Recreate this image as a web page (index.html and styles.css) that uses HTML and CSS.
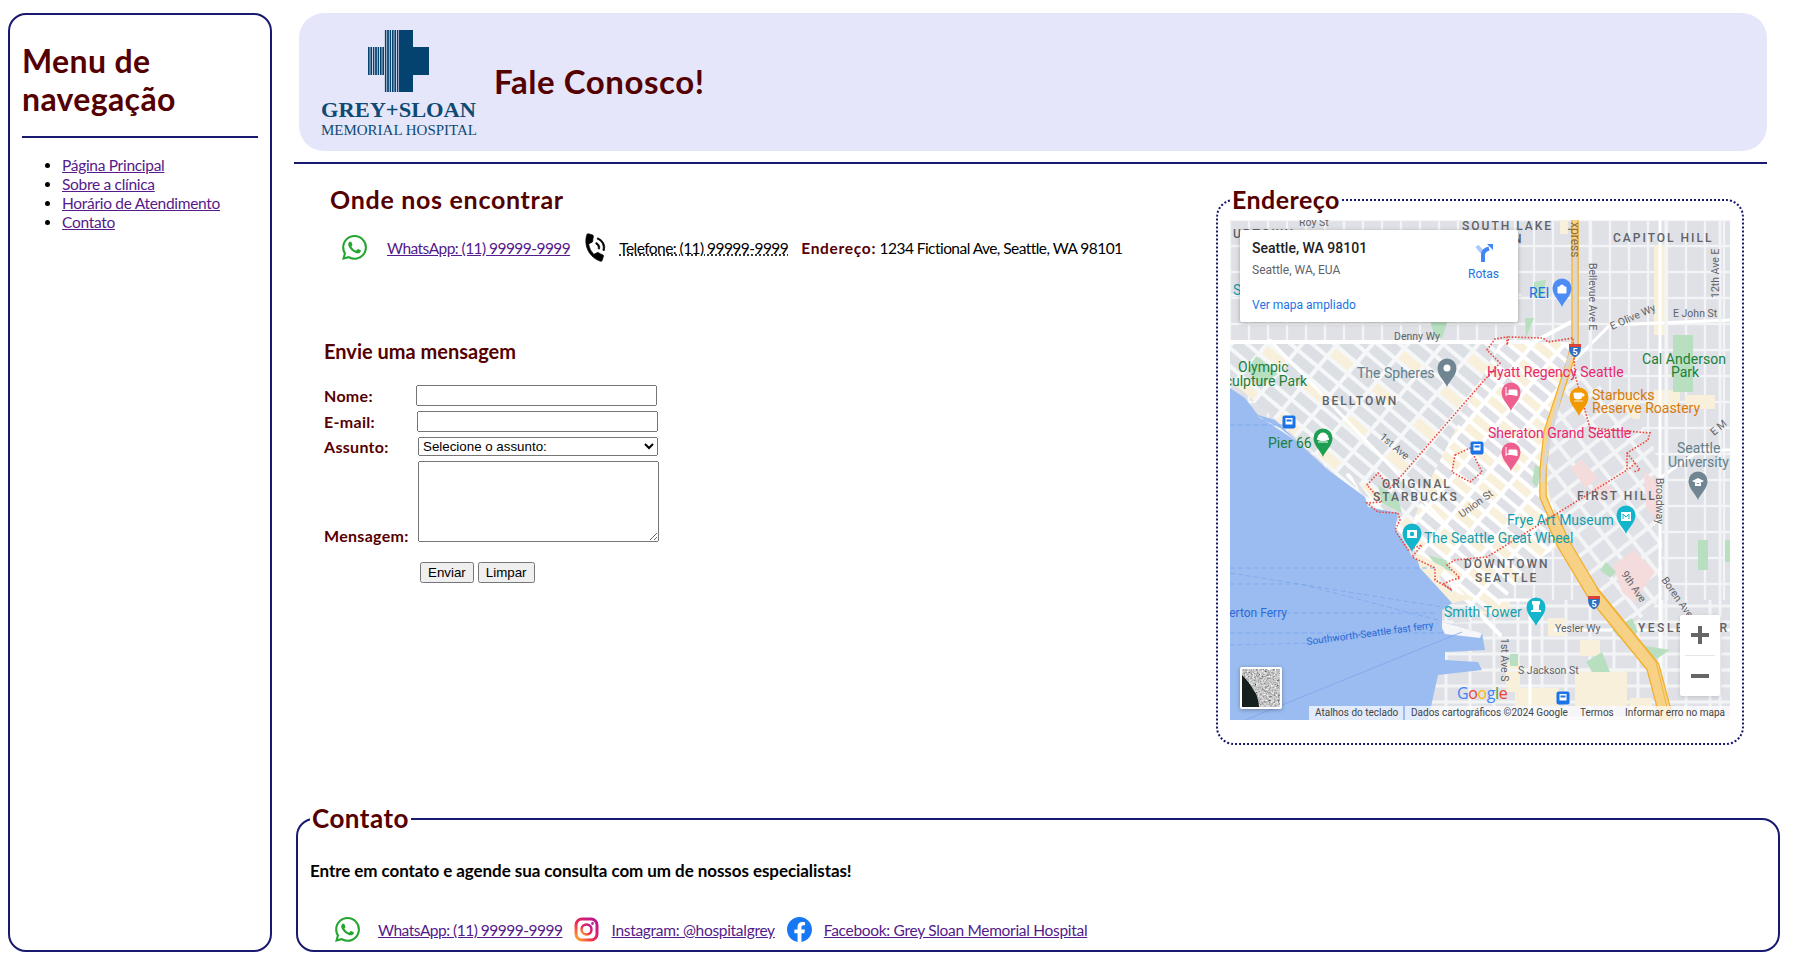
FILE: index.html
```html
<!DOCTYPE html>
<html lang="pt-BR">
<head>
<meta charset="utf-8">
<title>Fale Conosco</title>
<link rel="stylesheet" href="styles.css">
</head>
<body>
<svg class="defs" width="0" height="0" aria-hidden="true">
  <defs>
    <symbol id="i-wa" viewBox="0 0 24 24"><path fill="#25a52f" d="M17.472 14.382c-.297-.149-1.758-.867-2.03-.967-.273-.099-.471-.148-.67.15-.197.297-.767.966-.94 1.164-.173.199-.347.223-.644.075-.297-.15-1.255-.463-2.39-1.475-.883-.788-1.48-1.761-1.653-2.059-.173-.297-.018-.458.13-.606.134-.133.298-.347.446-.52.149-.174.198-.298.298-.497.099-.198.05-.371-.025-.52-.075-.149-.669-1.612-.916-2.207-.242-.579-.487-.5-.669-.51-.173-.008-.371-.01-.57-.01-.198 0-.52.074-.792.372-.272.297-1.04 1.016-1.04 2.479 0 1.462 1.065 2.875 1.213 3.074.149.198 2.096 3.2 5.077 4.487.709.306 1.262.489 1.694.625.712.227 1.36.195 1.871.118.571-.085 1.758-.719 2.006-1.413.248-.694.248-1.289.173-1.413-.074-.124-.272-.198-.57-.347m-5.421 7.403h-.004a9.87 9.87 0 01-5.031-1.378l-.361-.214-3.741.982.998-3.648-.235-.374a9.86 9.86 0 01-1.51-5.26c.001-5.45 4.436-9.884 9.888-9.884 2.64 0 5.122 1.03 6.988 2.898a9.825 9.825 0 012.893 6.994c-.003 5.45-4.437 9.884-9.885 9.884m8.413-18.297A11.815 11.815 0 0012.05 0C5.495 0 .16 5.335.157 11.892c0 2.096.547 4.142 1.588 5.945L.057 24l6.305-1.654a11.882 11.882 0 005.683 1.448h.005c6.554 0 11.89-5.335 11.893-11.893a11.821 11.821 0 00-3.48-8.413z"/></symbol>
    <symbol id="pin" viewBox="-10 -10 20 30" overflow="visible"><path d="M0 19C-2 13-9.5 8-9.5 0a9.5 9.5 0 0 1 19 0C9.5 8 2 13 0 19z"/></symbol>
    <linearGradient id="ig" x1="0" y1="1" x2="1" y2="0"><stop offset="0" stop-color="#fdb52a"/><stop offset=".4" stop-color="#ee2a4c"/><stop offset="1" stop-color="#b3139c"/></linearGradient>
    <filter id="noise" x="0" y="0" width="100%" height="100%"><feTurbulence type="fractalNoise" baseFrequency="0.55" numOctaves="3" seed="4"/><feColorMatrix values="0.9 0.9 0 0 -0.35  0.9 0.9 0 0 -0.35  0.9 0.9 0 0 -0.35  0 0 0 0 1"/></filter>
  </defs>
</svg>
<div class="page">
  <aside class="side">
    <h2 class="side-title">Menu de navegação</h2>
    <hr class="rule side-rule">
    <ul class="side-list">
      <li><a href="#">Página Principal</a></li>
      <li><a href="#">Sobre a clínica</a></li>
      <li><a href="#">Horário de Atendimento</a></li>
      <li><a href="#">Contato</a></li>
    </ul>
  </aside>
  <main class="main">
    <header class="top">
      <svg class="logo" viewBox="0 0 160 115" width="160" height="115">
        <defs><pattern id="stripes" width="2.4" height="10" patternUnits="userSpaceOnUse" x="48"><rect width="1.6" height="10" fill="#04426f"/></pattern></defs>
        <rect x="48" y="21" width="16" height="28" fill="url(#stripes)"/>
        <rect x="64" y="4" width="16" height="62" fill="url(#stripes)"/>
        <rect x="79" y="4" width="14" height="62" fill="#04426f"/>
        <rect x="79" y="21" width="30" height="28" fill="#04426f"/>
        <text class="logo-a" x="1" y="91" textLength="155" lengthAdjust="spacingAndGlyphs">GREY+SLOAN</text>
        <text class="logo-b" x="1" y="108.500" textLength="156" lengthAdjust="spacingAndGlyphs">MEMORIAL HOSPITAL</text>
      </svg>
      <h1 class="top-title">Fale Conosco!</h1>
    </header>
    <hr class="rule main-rule">
    <div class="mid">
      <section class="left">
        <h2 class="where">Onde nos encontrar</h2>
        <div class="reach">
          <svg class="ico"><use href="#i-wa"/></svg>
          <a class="lnk lnk-wa" href="#">WhatsApp: (11) 99999-9999</a>
          <svg class="ico ico-ph" viewBox="2 2 20 20"><path transform="rotate(18 12 12)" stroke="#000" stroke-width=".5" d="M20 15.500c-1.250 0-2.450-.2-3.570-.57a1.020 1.020 0 0 0-1.020.24l-2.200 2.200a15.045 15.045 0 0 1-6.590-6.580l2.200-2.210a.96.96 0 0 0 .25-1A11.360 11.360 0 0 1 8.500 4c0-.55-.45-1-1-1H4c-.55 0-1 .45-1 1 0 9.390 7.610 17 17 17 .55 0 1-.45 1-1v-3.500c0-.55-.45-1-1-1zM19 12h1.200a8.200 8.200 0 0 0-8.200-8.200v1.200c3.870 0 7 3.130 7 7zm-4 0h1.200c0-2.300-1.900-4.200-4.200-4.200v1.200c1.660 0 3 1.340 3 3z"/></svg>
          <span class="tel">Telefone: (11) 99999-9999</span>
          <span class="addr"><b>Endereço:</b> 1234 Fictional Ave, Seattle, WA 98101</span>
        </div>
        <h3 class="send">Envie uma mensagem</h3>
        <form class="form">
          <div class="row"><label class="lab lab-n" for="f1">Nome:</label><input id="f1" class="ctl ctl-text" type="text"></div>
          <div class="row"><label class="lab lab-e" for="f2">E-mail:</label><input id="f2" class="ctl ctl-text" type="text"></div>
          <div class="row"><label class="lab lab-a" for="f3">Assunto:</label><select id="f3" class="ctl ctl-sel"><option>Selecione o assunto:</option></select></div>
          <div class="row row-end"><label class="lab lab-a lab-m" for="f4">Mensagem:</label><textarea id="f4" class="ctl ctl-area"></textarea></div>
          <div class="btns"><button class="btn" type="button">Enviar</button><button class="btn" type="reset">Limpar</button></div>
        </form>
      </section>
      <fieldset class="box box-map">
        <legend class="leg leg-e">Endereço</legend>
        <div class="map">
          <svg class="map-svg" viewBox="0 0 500 500" width="500" height="500">
            <defs>
              <pattern id="gE" width="19" height="26" patternUnits="userSpaceOnUse"><rect width="19" height="26" fill="#f3f4f5"/><rect x="1.200" y="1.200" width="16.600" height="23.600" fill="#dfe1e6"/></pattern>
              <pattern id="gS" width="24" height="16" patternUnits="userSpaceOnUse" y="2"><rect width="24" height="16" fill="#f3f4f5"/><rect x="1.500" y="1.500" width="21" height="13" fill="#dfe1e6"/></pattern>
              <pattern id="gD" width="54" height="42" patternUnits="userSpaceOnUse" patternTransform="rotate(40)"><rect width="54" height="42" fill="#f6f7f8"/><g fill="#dcdfe4"><rect x="2" y="2" width="23" height="10"/><rect x="29" y="2" width="23" height="10"/><rect x="2" y="16" width="23" height="10"/><rect x="29" y="30" width="23" height="10"/><rect x="29" y="16" width="23" height="10"/></g><rect x="2" y="30" width="23" height="10" fill="#f8f0da"/></pattern>
              <pattern id="gY" width="48" height="36" patternUnits="userSpaceOnUse" patternTransform="rotate(40)"><rect width="48" height="36" fill="#fff"/><g fill="#dfe1e6"><rect x="2" y="2" width="20" height="8"/><rect x="26" y="14" width="20" height="8"/><rect x="2" y="26" width="20" height="8"/></g><g fill="#f8f0da"><rect x="26" y="2" width="20" height="8"/><rect x="2" y="14" width="20" height="8"/><rect x="26" y="26" width="20" height="8"/></g></pattern>
              <pattern id="gH" width="40" height="40" patternUnits="userSpaceOnUse" patternTransform="rotate(-38)"><rect width="40" height="40" fill="#f3f4f5"/><g fill="#dfe1e6"><rect x="2" y="2" width="16" height="16"/><rect x="22" y="2" width="16" height="16"/><rect x="2" y="22" width="16" height="16"/><rect x="22" y="22" width="16" height="16"/></g></pattern>
            </defs>
            <rect width="500" height="500" fill="url(#gE)"/>
            <rect y="380" width="500" height="120" fill="url(#gS)"/>
            <g fill="#f8f0da">
              <rect x="424" y="25" width="11" height="90"/><rect x="424" y="170" width="26" height="20"/><rect x="330" y="0" width="8" height="14"/>
              <rect x="455" y="175" width="30" height="14"/><rect x="370" y="175" width="40" height="24"/><rect x="60" y="62" width="40" height="28"/>
              <rect x="276" y="442" width="14" height="30"/><rect x="318" y="398" width="18" height="18"/><rect x="350" y="420" width="20" height="16"/>
              <rect x="285" y="468" width="44" height="18"/><rect x="345" y="450" width="52" height="36"/><rect x="400" y="478" width="22" height="20"/>
              <rect x="250" y="380" width="30" height="14"/>
            </g>
            <polygon points="0,122 110,122 300,124 343,122 326,190 313,250 333,323 300,345 262,395 222,372 138,285 60,212 0,160" fill="url(#gD)"/>
            <polygon points="270,122 343,122 326,190 313,250 333,323 300,345 262,395 222,372 175,320 200,260" fill="url(#gY)"/>
            <polygon points="343,140 420,215 432,258 432,375 420,392 392,410 363,373 333,323 315,255 325,190" fill="url(#gH)"/>
            <g fill="#f5dcdc">
              <polygon points="340,248 352,240 368,258 356,268"/><polygon points="383,345 404,330 425,352 404,382 392,372"/><polygon points="414,252 428,262 428,300 416,288"/><polygon points="362,268 374,260 384,270 372,282"/>
            </g>
            <g fill="none" stroke="#fff" stroke-linecap="round">
              <path stroke-width="4" d="M0 122H300M300 124L345 100M118 255L270 415"/>
              <path stroke-width="3" d="M430 258L470 230H500M325 410H500M430 0V500M270 380H300V500M345 140L380 105 500 100M40 120L250 340"/>
              <path stroke-width="3" stroke="#f3f4f5" d="M360 0V130M436 0V500M0 75H290M490 0V500M270 450H500"/>
            </g>
            <g fill="#b8e0c0">
              <rect x="443" y="115" width="20" height="57"/><rect x="468" y="320" width="10" height="30"/><rect x="280" y="434" width="8" height="12"/><rect x="495" y="320" width="5" height="22"/>
              <polygon points="200,100 218,100 212,118 205,118"/><polygon points="304,62 316,60 312,78 304,78"/><polygon points="296,118 304,98 295,98"/><polygon points="26,136 48,154 30,165 18,150"/>
              <polygon points="382,410 402,398 408,412 392,420"/><polygon points="410,425 440,430 425,440"/><polygon points="356,442 372,432 380,452 362,452"/><polygon points="148,265 168,278 172,293 152,283"/><polygon points="198,335 216,340 222,352 206,345"/>
              <polygon points="376,342 386,352 380,358 370,350"/><polygon points="305,245 312,248 307,268 302,262"/>
            </g>
            <path d="M0 500V168L15 178 28 195 45 200 68 222 98 250 135 277 138 287 168 293 165 310 175 323 182 337 205 348 205 360 222 370 222 383 212 390 212 402 252 413 255 430 215 432 215 440 248 442 252 450 208 455 198 500Z" fill="#9bbcf0"/>
            <path d="M212 402L252 413 250 418 215 414 212 408Z" fill="#f5f6f7"/>
            <path d="M222 395H238L240 402 224 403Z" fill="#dfe1e6"/>
            <path d="M120 253L128 262 140 278 132 275Z" fill="#dfe1e6"/>
            <path d="M185 332L215 348 208 360 222 372 245 378 222 383 190 348Z" fill="#f8f0da"/>
            <polygon points="28,196 68,222 50,208 30,198" fill="#f3f4f5"/>
            <g fill="none" stroke="#7aa6ee" stroke-width=".8" stroke-dasharray="5 3">
              <path d="M0 348H205"/><path d="M0 353L212 387"/><path d="M0 364L70 364 208 400"/><path d="M0 393H208"/><path d="M0 413H215"/><path d="M0 425L80 423 208 403"/><path d="M0 205H55"/>
            </g>
            <path d="M15 500L232 412" fill="none" stroke="#7aa6ee" stroke-width=".8"/>
            <path fill="none" stroke="#f3ae2a" stroke-width="7.500" d="M345 0V122L340 142 317 212 313 250 313 277 333 323"/>
            <path fill="none" stroke="#f8d48d" stroke-width="5" d="M345 0V122L340 142 317 212 313 250 313 277 333 323"/>
            <path fill="none" stroke="#d5d7db" stroke-width="3.500" d="M345 20V122L338 142 318 225 312 262"/>
            <path fill="none" stroke="#f3ae2a" stroke-width="14" d="M321 296L333 323 363 373 393 410 423 447 437 500"/>
            <path fill="none" stroke="#f6d186" stroke-width="11.500" d="M321 296L333 323 363 373 393 410 423 447 437 500"/>
            <path fill="none" stroke="#f3ae2a" stroke-width=".8" d="M366 368L396 405 426 442 440 500"/>
            <g fill="none" stroke="#ee4a3f" stroke-width="1.600" stroke-dasharray="1.600 1.600">
              <path d="M250 165L270 143 257 130 265 119 277 117 277 125 279 117 313 118 318 122 343 118 345 155 360 208 420 213 418 220 397 233 397 250 257 337 225 340 217 345 230 358 222 360 213 364 222 370 205 360 205 348 182 337 192 325 178 330 165 310 170 300 168 293 148 292 137 283 152 282 137 265 148 253 160 268 172 255Z"/>
              <path d="M225 235L240 228 252 252 240 262 222 252Z"/>
              <path d="M397 233L405 243 398 250M405 243L410 250 403 252"/>
            </g>
            <g class="m-road">
              <text x="69" y="6">Roy St</text>
              <text x="164" y="120">Denny Wy</text>
              <text x="443" y="97">E John St</text>
              <text x="325" y="412">Yesler Wy</text>
              <text x="288" y="454">S Jackson St</text>
              <text transform="translate(149 218) rotate(40)">1st Ave</text>
              <text transform="translate(232 298) rotate(-36)">Union St</text>
              <text transform="translate(382 110) rotate(-24)">E Olive Wy</text>
              <text transform="translate(359 43) rotate(90)">Bellevue Ave E</text>
              <text transform="translate(489 78) rotate(-90)">12th Ave E</text>
              <text transform="translate(426 258) rotate(90)">Broadway</text>
              <text transform="translate(391 354) rotate(56)">9th Ave</text>
              <text transform="translate(431 360) rotate(55)">Boren Ave</text>
              <text transform="translate(271 418) rotate(90)">1st Ave S</text>
              <text transform="translate(484 216) rotate(-40)">E M</text>
              <text transform="translate(341 0) rotate(90)" class="m-exp" x="2">xpress</text>
            </g>
            <g class="m-area">
              <text x="3" y="18">UPTOWN</text>
              <text x="232" y="10">SOUTH LAKE</text>
              <text x="247" y="23">UNION</text>
              <text x="383" y="22">CAPITOL HILL</text>
              <text x="92" y="185">BELLTOWN</text>
              <text x="152" y="268">ORIGINAL</text>
              <text x="143" y="281">STARBUCKS</text>
              <text x="234" y="348">DOWNTOWN</text>
              <text x="245" y="362">SEATTLE</text>
              <text x="347" y="280">FIRST HILL</text>
              <text class="m-yes" x="408" y="412">YESLER TERRACE</text>
            </g>
            <g class="m-poi">
              <text class="c-green" x="8" y="152">Olympic</text>
              <text class="c-green" x="77" y="166" text-anchor="end">Sculpture Park</text>
              <text class="c-slate" x="127" y="158">The Spheres</text>
              <text class="c-green" x="38" y="228">Pier 66</text>
              <text class="c-blue" x="299" y="78">REI</text>
              <text class="c-green" x="412" y="144" textLength="84">Cal Anderson</text>
              <text class="c-green" x="441" y="157">Park</text>
              <text class="c-pink" x="257" y="157">Hyatt Regency Seattle</text>
              <text class="c-orange" x="362" y="180">Starbucks</text>
              <text class="c-orange" x="362" y="193">Reserve Roastery</text>
              <text class="c-pink" x="258" y="218">Sheraton Grand Seattle</text>
              <text class="c-slate" x="447" y="233">Seattle</text>
              <text class="c-slate" x="438" y="247">University</text>
              <text class="c-teal" x="194" y="323">The Seattle Great Wheel</text>
              <text class="c-teal" x="277" y="305">Frye Art Museum</text>
              <text class="c-teal" x="214" y="397">Smith Tower</text>
              <text class="c-teal" x="3" y="75">S</text>
              <text class="c-ferry" x="57" y="397" text-anchor="end">Bremerton Ferry</text>
              <text class="c-ferry c-small" transform="translate(77 425) rotate(-7.500)">Southworth-Seattle fast ferry</text>
            </g>
            <use href="#pin" x="207" y="138" width="20" height="30" fill="#6f8692"/><circle cx="217" cy="148" r="3.500" fill="#fff"/>
            <use href="#pin" x="83" y="208" width="20" height="30" fill="#1e9e52"/><path d="M88 218a5 5 0 0 1 10 0l1 1c-3 2-9 2-12 0zM88 222h10" fill="#fff" stroke="#fff" stroke-width="1"/>
            <use href="#pin" x="322" y="58" width="20" height="30" fill="#4c8df5"/><path d="M328 67h8v6h-8zM330 67a2 2 0 0 1 4 0" fill="#fff" stroke="#fff" stroke-width="1"/>
            <use href="#pin" x="271" y="162" width="20" height="30" fill="#ee5f8f"/><path d="M276 167v9M276 174h11v2M279 170h7a1 1 0 0 1 1 1v3h-8z" fill="#fff" stroke="#fff" stroke-width="1"/>
            <use href="#pin" x="271" y="222" width="20" height="30" fill="#ee5f8f"/><path d="M276 227v9M276 234h11v2M279 230h7a1 1 0 0 1 1 1v3h-8z" fill="#fff" stroke="#fff" stroke-width="1"/>
            <use href="#pin" x="339" y="167" width="20" height="30" fill="#f29900"/><path d="M344 173h8v3a3 3 0 0 1-3 3h-2a3 3 0 0 1-3-3zM352 174h2v2h-2zM344 181h9" fill="#fff" stroke="#fff" stroke-width=".8"/>
            <use href="#pin" x="172" y="303" width="20" height="30" fill="#12b5cb"/><path d="M177 310h10v8h-10z" fill="#fff"/><circle cx="182" cy="314" r="2.200" fill="#12b5cb"/>
            <use href="#pin" x="386" y="285" width="20" height="30" fill="#12b5cb"/><path d="M391 292h10v9h-10z" fill="#fff"/><path d="M393 299v-5l3 3 3-3v5" fill="none" stroke="#12b5cb" stroke-width="1"/>
            <use href="#pin" x="296" y="377" width="20" height="30" fill="#12b5cb"/><path d="M302 381h8v3l-1 1v5h2v2h-10v-2h2v-5l-1-1z" fill="#fff"/>
            <use href="#pin" x="458" y="251" width="20" height="30" fill="#6f8692"/><path d="M462 261l6-3 6 3-6 3zM465 263v3h6v-3" fill="#fff"/>
            <g fill="#1a73e8"><rect x="52.500" y="195.500" width="13" height="13" rx="2"/><rect x="240.500" y="221.500" width="13" height="13" rx="2"/><rect x="326.500" y="471.500" width="13" height="13" rx="2"/></g>
            <g fill="#fff"><path d="M55.500 198h7v6.500h-7zM243.500 224h7v6.500h-7zM329.500 474h7v6.500h-7z"/></g>
            <g fill="#1a73e8"><rect x="56.500" y="199.500" width="5" height="2"/><rect x="244.500" y="225.500" width="5" height="2"/><rect x="330.500" y="475.500" width="5" height="2"/></g>
            <path d="M339 124h12v3.500q0 7-6 10-6-3-6-10z" fill="#2f6fc0"/><path d="M339 124h12v3h-12z" fill="#d8433a"/><text class="m-shield" x="345" y="134.500">5</text>
            <path d="M358 376h12v3.500q0 7-6 10-6-3-6-10z" fill="#2f6fc0"/><path d="M358 376h12v3h-12z" fill="#d8433a"/><text class="m-shield" x="364" y="386.500">5</text>
            <text class="m-google" x="227" y="479"><tspan fill="#4285f4">G</tspan><tspan fill="#ea4335">o</tspan><tspan fill="#fbbc05">o</tspan><tspan fill="#4285f4">g</tspan><tspan fill="#34a853">l</tspan><tspan fill="#ea4335">e</tspan></text>
          </svg>
          <div class="card">
            <div class="card-info">
              <div class="card-title">Seattle, WA 98101</div>
              <div class="card-sub">Seattle, WA, EUA</div>
              <a class="card-link" href="#">Ver mapa ampliado</a>
            </div>
            <div class="card-dir">
              <svg viewBox="0 0 18 18" width="18" height="18"><path d="M2 2L8 9" fill="none" stroke="#a9c9f7" stroke-width="4"/><path d="M8 18V11Q8 6 14 4.500" fill="none" stroke="#4285f4" stroke-width="4"/><path d="M12 0H18V6Z" fill="#4285f4"/></svg>
              <span>Rotas</span>
            </div>
          </div>
          <div class="sat">
            <svg viewBox="0 0 38 38" width="38" height="38"><rect width="38" height="38" filter="url(#noise)"/><path d="M0 6Q8 14 12 22 16 26 17 38H0Z" fill="#15201f"/></svg>
          </div>
          <div class="zoom">
            <div class="zoom-btn"><svg viewBox="0 0 18 18" width="18" height="18"><path d="M7 0h4v7h7v4h-7v7H7v-7H0V7h7z" fill="#666"/></svg></div>
            <div class="zoom-sep"></div>
            <div class="zoom-btn"><svg viewBox="0 0 18 18" width="18" height="18"><path d="M0 7h18v4H0z" fill="#666"/></svg></div>
          </div>
          <div class="attr">
            <span class="attr-a">Atalhos do teclado</span>
            <span class="attr-b">Dados cartográficos ©2024 Google</span>
            <span class="attr-c">Termos</span>
            <span class="attr-d">Informar erro no mapa</span>
          </div>
        </div>
      </fieldset>
    </div>
    <fieldset class="box box-contact">
      <legend class="leg leg-c">Contato</legend>
      <p class="lead">Entre em contato e agende sua consulta com um de nossos especialistas!</p>
      <div class="social">
        <svg class="ico"><use href="#i-wa"/></svg>
        <a class="lnk lnk-wa" href="#">WhatsApp: (11) 99999-9999</a>
        <svg class="ico ico-ig" viewBox="0 0 25 25"><rect x="2" y="2" width="21" height="21" rx="6" fill="none" stroke="url(#ig)" stroke-width="3"/><circle cx="12.500" cy="12.500" r="5" fill="none" stroke="url(#ig)" stroke-width="2.500"/><circle cx="18.500" cy="6.500" r="1.400" fill="#c1258a"/></svg>
        <a class="lnk lnk-ig" href="#">Instagram: @hospitalgrey</a>
        <svg class="ico ico-fb" viewBox="0 0 24 24"><path fill="#1877f2" d="M24 12.073c0-6.627-5.373-12-12-12s-12 5.373-12 12c0 5.990 4.388 10.954 10.125 11.854v-8.385H7.078v-3.470h3.047V9.430c0-3.007 1.792-4.669 4.533-4.669 1.312 0 2.686.235 2.686.235v2.953H15.830c-1.491 0-1.956.925-1.956 1.874v2.250h3.328l-.532 3.470h-2.796v8.385C19.612 23.027 24 18.062 24 12.073z"/></svg>
        <a class="lnk lnk-fb" href="#">Facebook: Grey Sloan Memorial Hospital</a>
      </div>
    </fieldset>
  </main>
</div>
</body>
</html>
```
FILE: styles.css
```css
* { box-sizing: border-box; }
html, body { margin: 0; padding: 0; background: #fff; overflow: hidden; }
body { font-family: Lato, "Open Sans", sans-serif; font-size: 16px; color: #000; }
.defs { position: absolute; }
a { color: #551a8b; }

.page { display: flex; gap: 22px; padding: 13px 0 0 8px; width: 1799px; height: 952px; }

.side { width: 264px; border: 2px solid #191970; border-radius: 18px; padding: 0 12px; flex: none; }
.side-title { margin: 27px 0 0; font-size: 32px; line-height: 38px; font-weight: 700; color: #550000; letter-spacing: 0.35px; }
.rule { border: 0; margin: 0; height: 2px; background: #191970; }
.side-rule { margin-top: 18px; }
.side-list { margin: 18px 0 0; padding: 0 0 0 40px; font-size: 15.500px; line-height: 19px; letter-spacing: -0.3px; }

.main { width: 1486px; flex: none; }
.top { display: flex; align-items: center; gap: 14px; height: 138px; width: 1468px; margin-left: 5px; padding-left: 21px; background: #e6e6fa; border-radius: 25px; }
.logo { flex: none; margin-top: 2px; }
.logo-a { font-family: "Liberation Serif", serif; font-weight: 700; font-size: 21px; fill: #0e4a73; }
.logo-b { font-family: "Liberation Serif", serif; font-size: 14.500px; fill: #0e4a73; }
.top-title { margin: 0; padding-bottom: 2px; font-size: 33px; font-weight: 700; color: #550000; letter-spacing: 0.55px; }
.main-rule { width: 1473px; margin-top: 11px; }

.mid { display: flex; justify-content: space-between; margin-top: 21px; padding-right: 36px; }
.left { width: 900px; }
.where { margin: 0 0 0 36px; font-size: 25px; line-height: 29px; font-weight: 700; color: #550000; letter-spacing: 0.7px; }
.reach { display: flex; align-items: center; margin: 21px 0 0 48px; height: 25px; }
.ico { width: 25px; height: 25px; flex: none; overflow: visible; }
.lnk { letter-spacing: -0.3px; font-size: 15.500px; }
.lnk-wa { letter-spacing: -0.55px; }
.reach .lnk-wa { margin-left: 20px; }
.ico-ph { margin-left: 12px; }
.tel { margin-left: 12px; font-size: 15.500px; letter-spacing: -0.55px; text-decoration: underline dotted; }
.addr { margin-left: 13px; font-size: 15.500px; letter-spacing: -0.55px; white-space: nowrap; }
.addr b { color: #550000; letter-spacing: 0.7px; }
.send { margin: 79px 0 0 30px; font-size: 20px; line-height: 24px; font-weight: 700; color: #550000; }

.form { margin: 22px 0 0 30px; font-size: 16px; }
.row { display: flex; align-items: center; margin-bottom: 5px; }
.row-end { align-items: flex-end; margin-bottom: 0; }
.lab { font-weight: 700; color: #550000; flex: none; letter-spacing: 0.3px; }
.lab-n { width: 92px; }
.lab-e { width: 93px; }
.lab-a { width: 94px; }
.lab-m { margin-bottom: -3px; }
.ctl { font-family: "Liberation Sans", sans-serif; font-size: 13.333px; margin: 0; letter-spacing: 0; }
.ctl-text { width: 241px; height: 21px; }
.ctl-sel { width: 240px; height: 19px; }
.ctl-area { width: 241px; height: 81px; }
.btns { display: flex; gap: 4px; margin: 20px 0 0 96px; }
.btn { font-family: "Liberation Sans", sans-serif; font-size: 13.333px; height: 21px; padding: 1px 6px; margin: 0; }

.box { margin: 0; min-width: 0; border: 2px dotted #191970; border-radius: 18px; padding: 6px 12px 23px; }
.box-map { width: 528px; flex: none; }
.leg { font-weight: 700; color: #550000; padding: 0 2px; line-height: 29px; font-size: 25px; }
.leg-e { letter-spacing: 0.45px; }
.map { position: relative; width: 500px; height: 500px; overflow: hidden; background: #dfe1e6; }
.map-svg { display: block; }
.m-road text { font: 400 10.500px Roboto, sans-serif; fill: #5f6368; }
.m-road .m-exp { fill: #8a6d3b; font-size: 12px; }
.m-area text { font: 500 12px Roboto, sans-serif; letter-spacing: 2px; fill: #5f6368; }
.m-area .m-yes { letter-spacing: 2.500px; }
.m-poi text { font: 400 14px Roboto, sans-serif; }
.m-poi .c-green { fill: #188038; }
.m-poi .c-slate { fill: #637f8c; }
.m-poi .c-blue { fill: #1a73e8; }
.m-poi .c-pink { fill: #e8286e; }
.m-poi .c-orange { fill: #d67a0a; }
.m-poi .c-teal { fill: #129eaf; }
.m-poi .c-ferry { fill: #2a6bd6; font-size: 12px; }
.m-poi .c-small { font-size: 10px; }
.m-shield { font: 700 9px Roboto, sans-serif; fill: #fff; text-anchor: middle; }
.m-google { font: 500 16px "Open Sans", sans-serif; letter-spacing: -0.4px; }

.card { position: absolute; left: 10px; top: 10px; width: 278px; height: 92px; display: flex; justify-content: space-between; padding: 9px 19px 0 12px; background: #fff; border-radius: 2px; box-shadow: 0 1px 4px rgba(0,0,0,.3); font-family: Roboto, sans-serif; }
.card-title { font-size: 14px; font-weight: 500; line-height: 18px; color: #202124; }
.card-sub { font-size: 12px; line-height: 16px; margin-top: 5px; color: #5f6368; }
.card-link { display: block; font-size: 12px; line-height: 16px; margin-top: 19px; color: #1a73e8; text-decoration: none; }
.card-dir { display: flex; flex-direction: column; align-items: center; padding-top: 5px; font-size: 12px; color: #1a73e8; line-height: 16px; }
.card-dir span { margin-top: 4px; }
.sat { position: absolute; left: 10px; top: 447px; width: 42px; height: 42px; border: 2px solid #fff; border-radius: 2px; box-shadow: 0 1px 4px rgba(0,0,0,.3); }
.sat svg { display: block; }
.zoom { position: absolute; left: 450px; top: 395px; width: 40px; height: 81px; background: #fff; border-radius: 2px; box-shadow: 0 1px 4px rgba(0,0,0,.15); display: flex; flex-direction: column; align-items: center; }
.zoom-btn { height: 40px; display: flex; align-items: center; justify-content: center; }
.zoom-sep { width: 30px; height: 1px; background: #e6e6e6; }
.attr { position: absolute; right: 0; bottom: 0; left: 79px; height: 14px; display: flex; font: 400 10px/14px Roboto, sans-serif; color: #444; }
.attr span { background: rgba(255,255,255,.7); padding: 0 6px; white-space: nowrap; }
.attr-a { width: 94px; margin-right: 2px; }
.attr-b { width: 169px; padding-left: 5px; }
.attr-c { width: 45px; }
.attr-d { flex: 1; }

.box-contact { border-style: solid; width: 1484px; margin: 58px 0 0 2px; padding: 5px 12px 0; height: 149px; }
.leg-c { font-size: 26px; line-height: 31px; letter-spacing: 0.5px; }
.lead { margin: 22px 0 0; font-size: 17px; line-height: 20px; font-weight: 700; letter-spacing: -0.07px; }
.social { display: flex; align-items: center; margin: 36px 0 0 25px; height: 25px; }
.social .lnk-wa { margin-left: 18px; letter-spacing: -0.5px; }
.ico-ig { margin-left: 12px; }
.lnk-ig { margin-left: 12px; }
.ico-fb { margin-left: 12px; }
.lnk-fb { margin-left: 12px; }
```
